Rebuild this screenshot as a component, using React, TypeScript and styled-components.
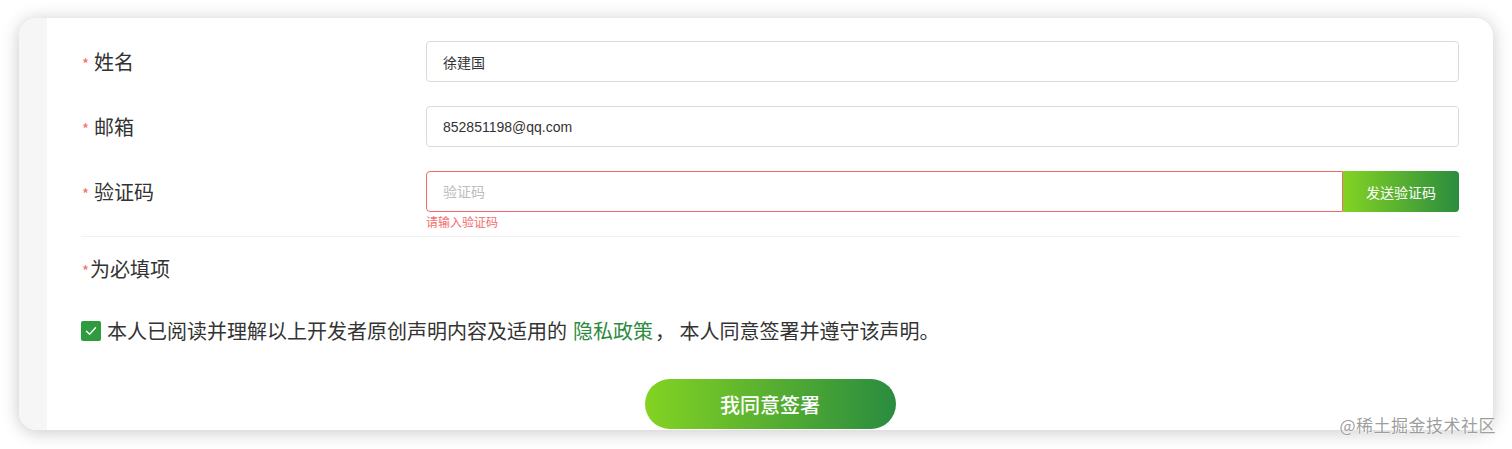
import React, { useState } from "react";
import styled, { createGlobalStyle } from "styled-components";

const GlobalStyle = createGlobalStyle`
  html, body {
    margin: 0;
    padding: 0;
    background: #ffffff;
  }
  body {
    font-family: "Noto Sans CJK SC", "Noto Sans", "Liberation Sans", sans-serif;
    color: #333333;
  }
`;

const Page = styled.div`
  position: relative;
  width: 1512px;
  height: 449px;
  padding: 18px 19px 0 19px;
  box-sizing: border-box;
  overflow: hidden;
`;

const Window = styled.div`
  display: flex;
  height: 412px;
  border-radius: 18px;
  background: #ffffff;
  box-shadow: 0 2px 18px rgba(0, 0, 0, 0.22);
  overflow: hidden;
`;

const SideStrip = styled.div`
  width: 28px;
  flex: none;
  background: #f6f6f6;
`;

const Content = styled.div`
  flex: 1;
  display: flex;
  flex-direction: column;
  padding: 23px 34px 0 34px;
`;

const FormRow = styled.div<{ $gap?: number }>`
  display: flex;
  align-items: flex-start;
  margin-bottom: ${(p) => p.$gap ?? 25}px;
`;

const Label = styled.div`
  width: 345px;
  flex: none;
  height: 40px;
  display: flex;
  align-items: center;
  font-size: 20px;
  color: #333333;
`;

const Star = styled.span<{ $tight?: boolean }>`
  color: #f56c6c;
  font-size: 15px;
  margin-right: ${(p) => (p.$tight ? 1 : 5)}px;
  margin-left: 1px;
  position: relative;
  top: 2px;
`;

const Field = styled.div`
  flex: 1;
  display: flex;
  flex-direction: column;
`;

const InputGroup = styled.div`
  display: flex;
  height: 41px;
`;

const TextInput = styled.input<{ $error?: boolean; $joined?: boolean }>`
  flex: 1;
  min-width: 0;
  height: 41px;
  box-sizing: border-box;
  padding: 0 16px;
  font-family: "Liberation Sans", "Noto Sans CJK SC", sans-serif;
  font-size: 14px;
  color: #333333;
  border: 1px solid ${(p) => (p.$error ? "#ee6a6a" : "#dadada")};
  border-radius: ${(p) => (p.$joined ? "4px 0 0 4px" : "4px")};
  outline: none;
  background: #ffffff;
  &::placeholder {
    color: #bdbdbd;
    font-family: "Noto Sans CJK SC", sans-serif;
  }
`;

const SendButton = styled.button`
  width: 116px;
  height: 41px;
  flex: none;
  border: none;
  border-radius: 0 4px 4px 0;
  background: linear-gradient(90deg, #84d322 0%, #2a8c3f 100%);
  color: #ffffff;
  font-family: inherit;
  font-size: 14px;
  cursor: pointer;
`;

const ErrorText = styled.div`
  margin-top: 3px;
  font-size: 12px;
  line-height: 14px;
  color: #f56c6c;
`;

const Divider = styled.div`
  height: 1px;
  background: #f0f0f0;
  margin-top: 7px;
`;

const RequiredNote = styled.div`
  margin-top: 18px;
  font-size: 20px;
  line-height: 28px;
  display: flex;
  align-items: center;
`;

const AgreeRow = styled.label`
  margin-top: 34px;
  display: flex;
  align-items: center;
  font-size: 20px;
  line-height: 28px;
  color: #333333;
  cursor: pointer;
`;

const CheckBox = styled.span<{ $checked: boolean }>`
  width: 20px;
  height: 20px;
  flex: none;
  margin-right: 6px;
  border-radius: 2px;
  background: ${(p) => (p.$checked ? "#2e9b3f" : "#ffffff")};
  border: ${(p) => (p.$checked ? "none" : "1px solid #cccccc")};
  display: flex;
  align-items: center;
  justify-content: center;
`;

const PolicyLink = styled.a`
  color: #2e8b3e;
  text-decoration: none;
  margin: 0 2px 0 6px;
`;

const SubmitRow = styled.div`
  margin-top: 34px;
  display: flex;
  justify-content: center;
`;

const SubmitButton = styled.button`
  width: 251px;
  height: 50px;
  border: none;
  border-radius: 25px;
  background: linear-gradient(90deg, #84d322 0%, #2a8c3f 100%);
  color: #ffffff;
  font-family: inherit;
  font-size: 20px;
  font-weight: 500;
  cursor: pointer;
`;

const Watermark = styled.div`
  position: absolute;
  right: 16px;
  bottom: 12px;
  font-size: 17px;
  color: rgba(140, 140, 140, 0.85);
  text-shadow: 0 0 2px #ffffff, 0 0 2px #ffffff;
  letter-spacing: 0.5px;
`;

export default function App() {
  // States
  const [name, setName] = useState("徐建国");
  const [email, setEmail] = useState("852851198@qq.com");
  const [code, setCode] = useState("");
  const [agreed, setAgreed] = useState(true);

  return (
    <>
      <GlobalStyle />
      <Page>
        <Window>
          <SideStrip />
          <Content>
            {/* Name */}
            <FormRow $gap={24}>
              <Label>
                <Star>*</Star>姓名
              </Label>
              <Field>
                <InputGroup>
                  <TextInput value={name} onChange={(e) => setName(e.target.value)} />
                </InputGroup>
              </Field>
            </FormRow>

            {/* Email */}
            <FormRow $gap={24}>
              <Label>
                <Star>*</Star>邮箱
              </Label>
              <Field>
                <InputGroup>
                  <TextInput value={email} onChange={(e) => setEmail(e.target.value)} />
                </InputGroup>
              </Field>
            </FormRow>

            {/* Code */}
            <FormRow $gap={0}>
              <Label>
                <Star>*</Star>验证码
              </Label>
              <Field>
                <InputGroup>
                  <TextInput
                    $error
                    $joined
                    placeholder="验证码"
                    value={code}
                    onChange={(e) => setCode(e.target.value)}
                  />
                  <SendButton>发送验证码</SendButton>
                </InputGroup>
                <ErrorText>请输入验证码</ErrorText>
              </Field>
            </FormRow>

            <Divider />

            <RequiredNote>
              <Star $tight>*</Star>为必填项
            </RequiredNote>

            <AgreeRow onClick={() => setAgreed(!agreed)}>
              <CheckBox $checked={agreed}>
                {agreed && (
                  <svg width="12" height="10" viewBox="0 0 12 10">
                    <path
                      d="M1.5 5.2 L4.6 8.2 L10.5 1.8"
                      fill="none"
                      stroke="#ffffff"
                      strokeWidth="1.4"
                      strokeLinecap="round"
                      strokeLinejoin="round"
                    />
                  </svg>
                )}
              </CheckBox>
              本人已阅读并理解以上开发者原创声明内容及适用的
              <PolicyLink href="#" onClick={(e) => e.preventDefault()}>
                隐私政策
              </PolicyLink>
              ， 本人同意签署并遵守该声明。
            </AgreeRow>

            <SubmitRow>
              <SubmitButton>我同意签署</SubmitButton>
            </SubmitRow>
          </Content>
        </Window>
        <Watermark>@稀土掘金技术社区</Watermark>
      </Page>
    </>
  );
}
